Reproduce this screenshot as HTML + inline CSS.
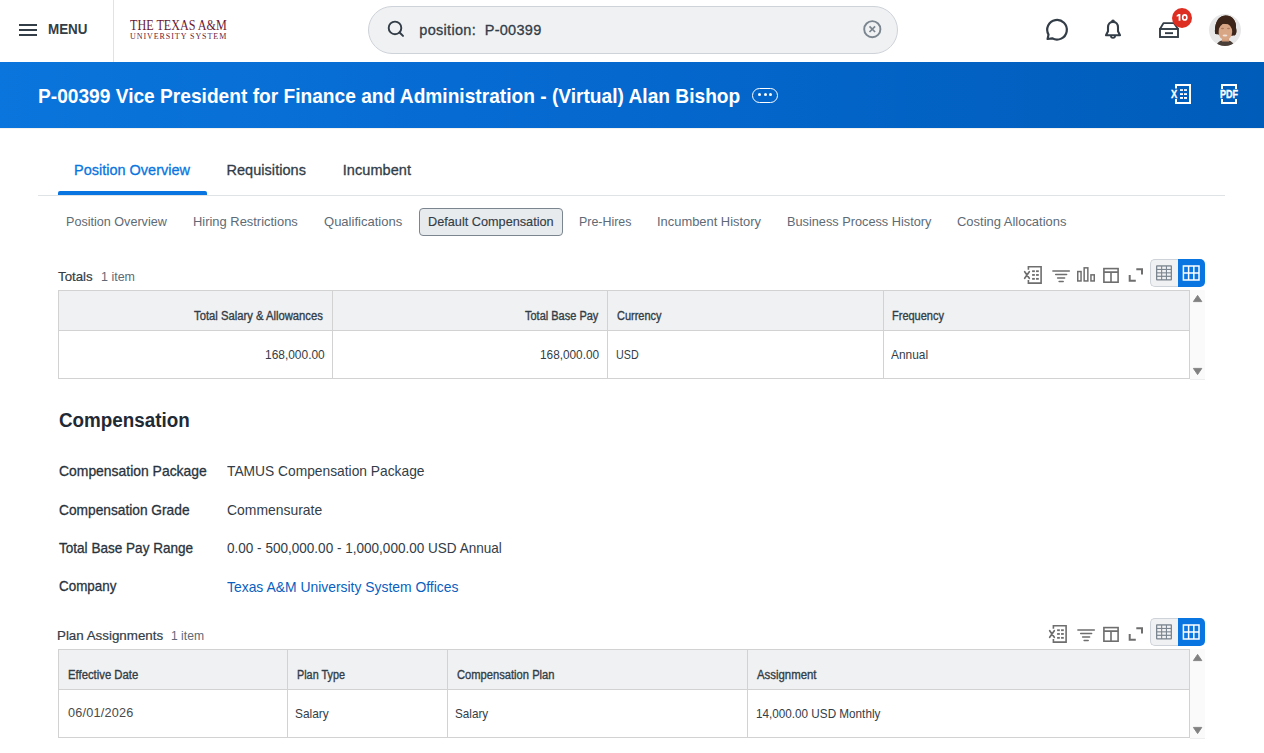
<!DOCTYPE html>
<html><head><meta charset="utf-8">
<style>
*{margin:0;padding:0;box-sizing:border-box}
html,body{width:1264px;height:753px;overflow:hidden;background:#fff;font-family:"Liberation Sans",sans-serif;color:#333d47}
.a{position:absolute;white-space:nowrap}
</style></head><body>
<div id="hdr" style="position:absolute;left:0;top:0;width:1264px;height:62px;background:#fff"></div>
<div class="a" style="left:19px;top:24px;width:18px;height:2px;background:#333d47"></div>
<div class="a" style="left:19px;top:29px;width:18px;height:2px;background:#333d47"></div>
<div class="a" style="left:19px;top:34px;width:18px;height:2px;background:#333d47"></div>
<div class="a" style="left:113px;top:0;width:1px;height:62px;background:#dfe2e6"></div>
<div class="a" style="left:368px;top:6px;width:530px;height:48px;border-radius:24px;background:#f0f1f2;border:1px solid #ced3d9"></div>
<svg class="a" style="left:384px;top:18px" width="24" height="24" viewBox="0 0 24 24"><circle cx="11" cy="9.9" r="6.3" fill="none" stroke="#333d47" stroke-width="1.9"/><path d="M15.6 14.5 L19 17.9" stroke="#333d47" stroke-width="2" stroke-linecap="round"/></svg>
<svg class="a" style="left:860px;top:17px" width="24" height="24" viewBox="0 0 24 24"><circle cx="12.3" cy="12.2" r="8.1" fill="none" stroke="#7b858f" stroke-width="1.9"/><path d="M9.5 9.4 L15.1 15 M15.1 9.4 L9.5 15" stroke="#7b858f" stroke-width="1.7"/></svg>
<svg class="a" style="left:1043px;top:16px" width="28" height="28" viewBox="0 0 28 28"><path d="M4.6 23 L5.5 18.6 A9.8 9.8 0 1 1 9.2 22.3 L4.6 23 Z" fill="none" stroke="#333d47" stroke-width="2.2" stroke-linejoin="round"/></svg>
<svg class="a" style="left:1101px;top:16px" width="24" height="26" viewBox="0 0 24 26"><path d="M12 5.9 C8.9 5.9 7 8.2 7 11.2 L7 15.3 L5 19.2 L19 19.2 L17 15.3 L17 11.2 C17 8.2 15.1 5.9 12 5.9 Z" fill="none" stroke="#333d47" stroke-width="2.1" stroke-linejoin="round"/><path d="M9.9 19.8 A2.1 2.1 0 0 0 14.1 19.8" fill="none" stroke="#333d47" stroke-width="1.8"/><path d="M10.1 5.5 A1.9 1.9 0 0 1 13.9 5.5 Z" fill="#333d47"/></svg>
<svg class="a" style="left:1157px;top:19px" width="24" height="22" viewBox="0 0 24 22"><path d="M3 10 L6.4 4.2 L17 4.2 L21 10" fill="none" stroke="#333d47" stroke-width="1.8" stroke-linejoin="round"/><rect x="3" y="10" width="18" height="8" fill="none" stroke="#333d47" stroke-width="1.9"/><rect x="8" y="13.2" width="8" height="1.9" fill="#333d47"/></svg>
<div class="a" style="left:1172px;top:8px;width:20px;height:20px;border-radius:50%;background:#de2e21"></div>
<svg class="a" style="left:1172px;top:8px" width="20" height="20" viewBox="0 0 20 20"><path d="M6.6 6 L8.4 6 L8.4 12.8 L6.6 12.8 L6.6 8 L4.7 8.7 L4.7 7.3 Z" fill="#fff"/><ellipse cx="12.75" cy="9.4" rx="2.1" ry="2.55" fill="none" stroke="#fff" stroke-width="1.6"/></svg>
<svg class="a" style="left:1209px;top:14px" width="32" height="32" viewBox="0 0 32 32">
  <defs><clipPath id="av"><circle cx="16" cy="16" r="16"/></clipPath></defs>
  <g clip-path="url(#av)">
    <rect width="32" height="32" fill="#e7e7e7"/>
    <path d="M7 32 C8 28.5 10.5 27 13 26.5 L19.5 26.5 C22 27 24.5 28.5 25.5 32 Z" fill="#4a3f38"/>
    <path d="M6 19.5 C5.5 11 8 2 16.5 1.6 C24 1.6 27.5 8 27 14 C27.8 17 27.5 20.5 25.5 21.5 C22 22 11 22 6 19.5 Z" fill="#3d2619"/>
    <rect x="13" y="22.5" width="7" height="5" fill="#cf9a7a"/>
    <ellipse cx="16.3" cy="17.8" rx="6.9" ry="8.3" fill="#d9a685"/>
    <ellipse cx="13.5" cy="14.5" rx="1.6" ry="0.7" fill="#b07a5e"/>
    <ellipse cx="19.5" cy="14.5" rx="1.6" ry="0.7" fill="#b07a5e"/>
    <path d="M6 19.5 C5.5 11 8 2 16.5 1.6 C24 1.6 27.5 8 27 14 C27.8 17 27.5 20.5 25.5 21.5 C24.5 17 23.5 13 22.5 10.5 C19 10.3 14 9.8 11 9 C10 11.5 9.5 15 9.3 19.5 C8 20.5 6.5 20.5 6 19.5 Z" fill="#3d2619"/>
    <ellipse cx="16" cy="21.6" rx="2.4" ry="1" fill="#efe2da"/>
  </g>
</svg>
<div id="banner" style="position:absolute;left:0;top:62px;width:1264px;height:66px;background:linear-gradient(90deg,#0a75dc 0%,#0569d0 45%,#005cb9 100%)"></div>
<div class="a" style="left:0;top:128px;width:1264px;height:1px;background:#f4f2f0"></div>
<div class="a" style="left:752px;top:88px;width:26px;height:15px;border:1.4px solid #fff;border-radius:8px"></div>
<div class="a" style="left:758.2px;top:93px;width:3px;height:3px;border-radius:50%;background:#fff"></div>
<div class="a" style="left:763.5px;top:93px;width:3px;height:3px;border-radius:50%;background:#fff"></div>
<div class="a" style="left:768.8px;top:93px;width:3px;height:3px;border-radius:50%;background:#fff"></div>
<svg class="a" style="left:1170px;top:80px" width="26" height="28" viewBox="0 0 26 28"><path d="M6 8.5 L6 5 L20 5 L20 23 L6 23 L6 19" fill="none" stroke="#fff" stroke-width="2"/><g fill="#fff"><rect x="10" y="9.2" width="3" height="1.7"/><rect x="14" y="9.2" width="3" height="1.7"/><rect x="10" y="13.2" width="3" height="1.8"/><rect x="14" y="13.2" width="3" height="1.8"/><rect x="10" y="17" width="3" height="1.9"/><rect x="14" y="17" width="3" height="1.9"/></g></svg>
<svg class="a" style="left:1216px;top:80px" width="26" height="28" viewBox="0 0 26 28"><path d="M6 9 L6 5 L20 5 L20 9 M6 19 L6 23 L20 23 L20 19" fill="none" stroke="#fff" stroke-width="2"/></svg>
<div class="a" style="left:58px;top:191px;width:149px;height:4px;background:#0875e1;border-radius:2px 2px 0 0"></div>
<div class="a" style="left:38px;top:195px;width:1187px;height:1px;background:#e0e3e6"></div>
<div class="a" style="left:419px;top:208px;width:144px;height:28px;border:1px solid #7b858f;border-radius:4px;background:#e8ebed"></div>

<!-- toolbar 1 -->
<svg class="a" style="left:1020px;top:262px" width="26" height="26" viewBox="0 0 26 26"><path d="M8.4 7.8 L8.4 4.8 L21.1 4.8 L21.1 21.1 L8.4 21.1 L8.4 18" fill="none" stroke="#6e6e6e" stroke-width="1.6"/><path d="M4.7 9.7 L9.3 16.3 M9.3 9.7 L4.7 16.3" stroke="#6e6e6e" stroke-width="1.7" stroke-linecap="round"/><g fill="#6e6e6e"><rect x="12.1" y="8.3" width="2.75" height="1.8"/><rect x="16.05" y="8.3" width="2.75" height="1.8"/><rect x="12.1" y="12.05" width="2.75" height="1.8"/><rect x="16.05" y="12.05" width="2.75" height="1.8"/><rect x="12.1" y="15.95" width="2.75" height="1.8"/><rect x="16.05" y="15.95" width="2.75" height="1.8"/></g></svg>
<svg class="a" style="left:1048px;top:262px" width="26" height="26" viewBox="0 0 26 26"><g stroke="#6e6e6e" stroke-width="1.5" stroke-linecap="round"><path d="M4.9 9 L21.3 9"/><path d="M7.7 12.4 L18.6 12.4"/><path d="M9.6 16.1 L16.6 16.1"/><path d="M11.1 19.5 L15.2 19.5"/></g></svg>
<svg class="a" style="left:1073px;top:262px" width="26" height="26" viewBox="0 0 26 26"><g fill="none" stroke="#6e6e6e" stroke-width="1.5"><rect x="4.75" y="9.55" width="3.3" height="9.4"/><rect x="11.15" y="5.85" width="3.7" height="13.1"/><rect x="17.95" y="12.85" width="3.3" height="6.1"/></g></svg>
<svg class="a" style="left:1098px;top:262px" width="26" height="26" viewBox="0 0 26 26"><g fill="none" stroke="#6e6e6e" stroke-width="1.6"><rect x="5.9" y="6.6" width="14.2" height="13.6"/><path d="M5.9 10.1 L20.1 10.1 M13 10.1 L13 20.2"/></g></svg>
<svg class="a" style="left:1123px;top:262px" width="26" height="26" viewBox="0 0 26 26"><g fill="none" stroke="#6e6e6e" stroke-width="2"><path d="M13.3 7.3 L19 7.3 L19 12.5"/><path d="M6.7 13 L6.7 18.8 L12.8 18.8"/></g></svg>
<div class="a" style="left:1178px;top:259px;width:27px;height:28px;border-radius:0 5px 5px 0;background:#0875e1"></div>
<div class="a" style="left:1150px;top:259px;width:28px;height:28px;border-radius:5px 0 0 5px;background:#f0f1f2;border:1px solid #ced3d9;border-right:none"></div>
<svg class="a" style="left:1150px;top:259px" width="55" height="28" viewBox="0 0 55 28"><rect x="6" y="6.3" width="16" height="15.3" fill="#7b858f" rx="1"/><g fill="#f0f1f2"><rect x="7.3" y="7.6" width="3.8" height="2.3"/><rect x="12.2" y="7.6" width="3.7" height="2.3"/><rect x="17" y="7.6" width="3.7" height="2.3"/><rect x="7.3" y="11" width="3.8" height="2.3"/><rect x="12.2" y="11" width="3.7" height="2.3"/><rect x="17" y="11" width="3.7" height="2.3"/><rect x="7.3" y="14.4" width="3.8" height="2.3"/><rect x="12.2" y="14.4" width="3.7" height="2.3"/><rect x="17" y="14.4" width="3.7" height="2.3"/><rect x="7.3" y="17.9" width="3.8" height="2.3"/><rect x="12.2" y="17.9" width="3.7" height="2.3"/><rect x="17" y="17.9" width="3.7" height="2.3"/></g>
<g fill="none" stroke="#fff" stroke-width="1.5"><rect x="33.4" y="7" width="15.6" height="14"/><path d="M33.4 14 L49 14 M38.6 7 L38.6 21 M43.8 7 L43.8 21"/></g></svg>
<!-- table 1 -->
<div class="a" style="left:58px;top:290px;width:1132px;height:89px;border:1px solid #d2d2d2;background:#fff"></div>
<div class="a" style="left:59px;top:291px;width:1130px;height:40px;background:#f0f1f2;border-bottom:1px solid #d2d2d2"></div>
<div class="a" style="left:332px;top:291px;width:1px;height:87px;background:#d2d2d2"></div>
<div class="a" style="left:607px;top:291px;width:1px;height:87px;background:#d2d2d2"></div>
<div class="a" style="left:883px;top:291px;width:1px;height:87px;background:#d2d2d2"></div>
<div class="a" style="left:1190px;top:290px;width:15px;height:90px;background:#fafafa;border-bottom:1px solid #eceeef"></div>
<svg class="a" style="left:1190px;top:290px" width="15" height="90" viewBox="0 0 15 90"><path d="M3.4 11.6 L11.8 11.6 L7.6 5.4 Z" fill="#808080" stroke="#808080" stroke-width="0.9" stroke-linejoin="round"/><path d="M3.4 78.4 L11.8 78.4 L7.6 84.6 Z" fill="#808080" stroke="#808080" stroke-width="0.9" stroke-linejoin="round"/></svg>
<!-- toolbar 2 -->
<svg class="a" style="left:1045px;top:621px" width="26" height="26" viewBox="0 0 26 26"><path d="M8.4 7.8 L8.4 4.8 L21.1 4.8 L21.1 21.1 L8.4 21.1 L8.4 18" fill="none" stroke="#6e6e6e" stroke-width="1.6"/><path d="M4.7 9.7 L9.3 16.3 M9.3 9.7 L4.7 16.3" stroke="#6e6e6e" stroke-width="1.7" stroke-linecap="round"/><g fill="#6e6e6e"><rect x="12.1" y="8.3" width="2.75" height="1.8"/><rect x="16.05" y="8.3" width="2.75" height="1.8"/><rect x="12.1" y="12.05" width="2.75" height="1.8"/><rect x="16.05" y="12.05" width="2.75" height="1.8"/><rect x="12.1" y="15.95" width="2.75" height="1.8"/><rect x="16.05" y="15.95" width="2.75" height="1.8"/></g></svg>
<svg class="a" style="left:1073px;top:621px" width="26" height="26" viewBox="0 0 26 26"><g stroke="#6e6e6e" stroke-width="1.5" stroke-linecap="round"><path d="M4.9 9 L21.3 9"/><path d="M7.7 12.4 L18.6 12.4"/><path d="M9.6 16.1 L16.6 16.1"/><path d="M11.1 19.5 L15.2 19.5"/></g></svg>
<svg class="a" style="left:1098px;top:621px" width="26" height="26" viewBox="0 0 26 26"><g fill="none" stroke="#6e6e6e" stroke-width="1.6"><rect x="5.9" y="6.6" width="14.2" height="13.6"/><path d="M5.9 10.1 L20.1 10.1 M13 10.1 L13 20.2"/></g></svg>
<svg class="a" style="left:1123px;top:621px" width="26" height="26" viewBox="0 0 26 26"><g fill="none" stroke="#6e6e6e" stroke-width="2"><path d="M13.3 7.3 L19 7.3 L19 12.5"/><path d="M6.7 13 L6.7 18.8 L12.8 18.8"/></g></svg>
<div class="a" style="left:1178px;top:618px;width:27px;height:28px;border-radius:0 5px 5px 0;background:#0875e1"></div>
<div class="a" style="left:1150px;top:618px;width:28px;height:28px;border-radius:5px 0 0 5px;background:#f0f1f2;border:1px solid #ced3d9;border-right:none"></div>
<svg class="a" style="left:1150px;top:618px" width="55" height="28" viewBox="0 0 55 28"><rect x="6" y="6.3" width="16" height="15.3" fill="#7b858f" rx="1"/><g fill="#f0f1f2"><rect x="7.3" y="7.6" width="3.8" height="2.3"/><rect x="12.2" y="7.6" width="3.7" height="2.3"/><rect x="17" y="7.6" width="3.7" height="2.3"/><rect x="7.3" y="11" width="3.8" height="2.3"/><rect x="12.2" y="11" width="3.7" height="2.3"/><rect x="17" y="11" width="3.7" height="2.3"/><rect x="7.3" y="14.4" width="3.8" height="2.3"/><rect x="12.2" y="14.4" width="3.7" height="2.3"/><rect x="17" y="14.4" width="3.7" height="2.3"/><rect x="7.3" y="17.9" width="3.8" height="2.3"/><rect x="12.2" y="17.9" width="3.7" height="2.3"/><rect x="17" y="17.9" width="3.7" height="2.3"/></g>
<g fill="none" stroke="#fff" stroke-width="1.5"><rect x="33.4" y="7" width="15.6" height="14"/><path d="M33.4 14 L49 14 M38.6 7 L38.6 21 M43.8 7 L43.8 21"/></g></svg>
<!-- table 2 -->
<div class="a" style="left:58px;top:649px;width:1132px;height:89px;border:1px solid #d2d2d2;background:#fff"></div>
<div class="a" style="left:59px;top:650px;width:1130px;height:40px;background:#f0f1f2;border-bottom:1px solid #d2d2d2"></div>
<div class="a" style="left:287px;top:650px;width:1px;height:87px;background:#d2d2d2"></div>
<div class="a" style="left:447px;top:650px;width:1px;height:87px;background:#d2d2d2"></div>
<div class="a" style="left:747px;top:650px;width:1px;height:87px;background:#d2d2d2"></div>
<div class="a" style="left:1190px;top:649px;width:15px;height:90px;background:#fafafa;border-bottom:1px solid #eceeef"></div>
<svg class="a" style="left:1190px;top:649px" width="15" height="90" viewBox="0 0 15 90"><path d="M3.4 11.6 L11.8 11.6 L7.6 5.4 Z" fill="#808080" stroke="#808080" stroke-width="0.9" stroke-linejoin="round"/><path d="M3.4 78.4 L11.8 78.4 L7.6 84.6 Z" fill="#808080" stroke="#808080" stroke-width="0.9" stroke-linejoin="round"/></svg>

<div class="a" style="left:130.0px;top:16.5px;font-family:'Liberation Serif',serif;font-size:14px;letter-spacing:0.0px;transform-origin:0 0;transform:scaleX(0.8667);line-height:18px;color:#6a1a35;">THE TEXAS A&amp;M</div>
<div class="a" style="left:130.0px;top:31.5px;font-family:'Liberation Serif',serif;font-size:8px;letter-spacing:0.938px;line-height:10px;color:#6a1a35;">UNIVERSITY SYSTEM</div>
<div class="a" style="left:1220.0px;top:88.8px;font-size:10px;font-weight:bold;letter-spacing:0.0px;transform-origin:0 0;transform:scaleX(0.9);line-height:12px;color:#fff;-webkit-text-stroke:0.3px #fff;">PDF</div>
<div class="a" style="left:1171.0px;top:89.0px;font-size:10px;font-weight:bold;letter-spacing:0.0px;transform-origin:0 0;transform:scaleX(0.9341);line-height:12px;color:#fff;-webkit-text-stroke:0.3px #fff;">X</div>
<div class="a" style="left:47.5px;top:20.2px;font-size:14.5px;font-weight:bold;letter-spacing:0.0px;transform-origin:0 0;transform:scaleX(0.9246);line-height:18px;color:#333d47;">MENU</div>
<div class="a" style="left:419.3px;top:20.8px;font-size:14.5px;letter-spacing:0.3px;line-height:18px;color:#333d47;-webkit-text-stroke:0.3px #333d47;">position:&nbsp; P-00399</div>
<div class="a" style="left:37.7px;top:83.0px;font-size:20.5px;font-weight:bold;letter-spacing:0.0px;transform-origin:0 0;transform:scaleX(0.934);line-height:26px;color:#fff;">P-00399 Vice President for Finance and Administration - (Virtual) Alan Bishop</div>
<div class="a" style="left:73.8px;top:161.1px;font-size:14.5px;letter-spacing:0.0px;transform-origin:0 0;transform:scaleX(0.9992);line-height:18px;color:#0875e1;-webkit-text-stroke:0.3px #0875e1;">Position Overview</div>
<div class="a" style="left:226.4px;top:161.2px;font-size:14.5px;letter-spacing:0.055px;line-height:18px;color:#333d47;-webkit-text-stroke:0.3px #333d47;">Requisitions</div>
<div class="a" style="left:342.7px;top:161.2px;font-size:14.5px;letter-spacing:0.075px;line-height:18px;color:#333d47;-webkit-text-stroke:0.3px #333d47;">Incumbent</div>
<div class="a" style="left:66.2px;top:214.1px;font-size:13.2px;letter-spacing:0.0px;transform-origin:0 0;transform:scaleX(0.9552);line-height:16px;color:#5e6a75;">Position Overview</div>
<div class="a" style="left:193.0px;top:214.1px;font-size:13.2px;letter-spacing:0.0px;transform-origin:0 0;transform:scaleX(0.9793);line-height:16px;color:#5e6a75;">Hiring Restrictions</div>
<div class="a" style="left:324.0px;top:214.1px;font-size:13.2px;letter-spacing:0.0px;transform-origin:0 0;transform:scaleX(0.9873);line-height:16px;color:#5e6a75;">Qualifications</div>
<div class="a" style="left:427.8px;top:213.9px;font-size:13.2px;letter-spacing:0.0px;transform-origin:0 0;transform:scaleX(0.9628);line-height:16px;color:#333d47;-webkit-text-stroke:0.15px #333d47;">Default Compensation</div>
<div class="a" style="left:579.0px;top:214.1px;font-size:13.2px;letter-spacing:0.0px;transform-origin:0 0;transform:scaleX(0.9427);line-height:16px;color:#5e6a75;">Pre-Hires</div>
<div class="a" style="left:657.0px;top:214.1px;font-size:13.2px;letter-spacing:0.0px;transform-origin:0 0;transform:scaleX(0.9784);line-height:16px;color:#5e6a75;">Incumbent History</div>
<div class="a" style="left:786.9px;top:214.1px;font-size:13.2px;letter-spacing:0.0px;transform-origin:0 0;transform:scaleX(0.9658);line-height:16px;color:#5e6a75;">Business Process History</div>
<div class="a" style="left:957.4px;top:214.1px;font-size:13.2px;letter-spacing:0.0px;transform-origin:0 0;transform:scaleX(0.982);line-height:16px;color:#5e6a75;">Costing Allocations</div>
<div class="a" style="left:58.2px;top:267.9px;font-size:13.4px;letter-spacing:0.0px;transform-origin:0 0;transform:scaleX(0.9915);line-height:17px;color:#333d47;-webkit-text-stroke:0.2px #333d47;">Totals</div>
<div class="a" style="left:101.0px;top:268.0px;font-size:13.4px;letter-spacing:0.0px;transform-origin:0 0;transform:scaleX(0.9315);line-height:17px;color:#5e6a75;">1 item</div>
<div class="a" style="left:194.3px;top:308.0px;font-size:12.5px;letter-spacing:0.0px;transform-origin:0 0;transform:scaleX(0.9);line-height:16px;color:#333d47;-webkit-text-stroke:0.35px #333d47;">Total Salary &amp; Allowances</div>
<div class="a" style="left:525.4px;top:308.0px;font-size:12.5px;letter-spacing:0.0px;transform-origin:0 0;transform:scaleX(0.8798);line-height:16px;color:#333d47;-webkit-text-stroke:0.35px #333d47;">Total Base Pay</div>
<div class="a" style="left:616.9px;top:308.0px;font-size:12.5px;letter-spacing:0.0px;transform-origin:0 0;transform:scaleX(0.8765);line-height:16px;color:#333d47;-webkit-text-stroke:0.35px #333d47;">Currency</div>
<div class="a" style="left:892.0px;top:308.0px;font-size:12.5px;letter-spacing:0.0px;transform-origin:0 0;transform:scaleX(0.8796);line-height:16px;color:#333d47;-webkit-text-stroke:0.35px #333d47;">Frequency</div>
<div class="a" style="left:265.0px;top:346.8px;font-size:12.7px;letter-spacing:0.0px;transform-origin:0 0;transform:scaleX(0.9406);line-height:16px;color:#333d47;">168,000.00</div>
<div class="a" style="left:540.1px;top:346.8px;font-size:12.7px;letter-spacing:0.0px;transform-origin:0 0;transform:scaleX(0.9307);line-height:16px;color:#333d47;">168,000.00</div>
<div class="a" style="left:615.5px;top:346.8px;font-size:12.7px;letter-spacing:0.0px;transform-origin:0 0;transform:scaleX(0.8445);line-height:16px;color:#333d47;">USD</div>
<div class="a" style="left:891.0px;top:346.8px;font-size:12.7px;letter-spacing:0.0px;transform-origin:0 0;transform:scaleX(0.9388);line-height:16px;color:#333d47;">Annual</div>
<div class="a" style="left:58.6px;top:407.8px;font-size:19.6px;font-weight:bold;letter-spacing:0.0px;transform-origin:0 0;transform:scaleX(0.9613);line-height:24px;color:#1f2a35;">Compensation</div>
<div class="a" style="left:58.7px;top:461.8px;font-size:14.5px;letter-spacing:0.0px;transform-origin:0 0;transform:scaleX(0.9598);line-height:18px;color:#29333d;-webkit-text-stroke:0.3px #29333d;">Compensation Package</div>
<div class="a" style="left:58.7px;top:500.8px;font-size:14.5px;letter-spacing:0.0px;transform-origin:0 0;transform:scaleX(0.9471);line-height:18px;color:#29333d;-webkit-text-stroke:0.3px #29333d;">Compensation Grade</div>
<div class="a" style="left:58.7px;top:538.9px;font-size:14.5px;letter-spacing:0.0px;transform-origin:0 0;transform:scaleX(0.9347);line-height:18px;color:#29333d;-webkit-text-stroke:0.3px #29333d;">Total Base Pay Range</div>
<div class="a" style="left:58.7px;top:577.4px;font-size:14.5px;letter-spacing:0.0px;transform-origin:0 0;transform:scaleX(0.9244);line-height:18px;color:#29333d;-webkit-text-stroke:0.3px #29333d;">Company</div>
<div class="a" style="left:227.3px;top:461.9px;font-size:14.5px;letter-spacing:0.0px;transform-origin:0 0;transform:scaleX(0.9512);line-height:18px;color:#333d47;">TAMUS Compensation Package</div>
<div class="a" style="left:227.3px;top:501.0px;font-size:14.5px;letter-spacing:0.0px;transform-origin:0 0;transform:scaleX(0.9596);line-height:18px;color:#333d47;">Commensurate</div>
<div class="a" style="left:227.3px;top:539.0px;font-size:14.5px;letter-spacing:0.0px;transform-origin:0 0;transform:scaleX(0.934);line-height:18px;color:#333d47;">0.00 - 500,000.00 - 1,000,000.00 USD Annual</div>
<div class="a" style="left:227.3px;top:578.2px;font-size:14.5px;letter-spacing:0.0px;transform-origin:0 0;transform:scaleX(0.9585);line-height:18px;color:#0a5fc0;">Texas A&amp;M University System Offices</div>
<div class="a" style="left:57.2px;top:627.0px;font-size:13.4px;letter-spacing:0.0px;transform-origin:0 0;transform:scaleX(0.9971);line-height:17px;color:#333d47;-webkit-text-stroke:0.2px #333d47;">Plan Assignments</div>
<div class="a" style="left:171.4px;top:627.0px;font-size:13.4px;letter-spacing:0.0px;transform-origin:0 0;transform:scaleX(0.9057);line-height:17px;color:#5e6a75;">1 item</div>
<div class="a" style="left:67.5px;top:667.0px;font-size:12.5px;letter-spacing:0.0px;transform-origin:0 0;transform:scaleX(0.9052);line-height:16px;color:#333d47;-webkit-text-stroke:0.35px #333d47;">Effective Date</div>
<div class="a" style="left:297.1px;top:666.8px;font-size:12.5px;letter-spacing:0.0px;transform-origin:0 0;transform:scaleX(0.8656);line-height:16px;color:#333d47;-webkit-text-stroke:0.35px #333d47;">Plan Type</div>
<div class="a" style="left:456.8px;top:666.8px;font-size:12.5px;letter-spacing:0.0px;transform-origin:0 0;transform:scaleX(0.8936);line-height:16px;color:#333d47;-webkit-text-stroke:0.35px #333d47;">Compensation Plan</div>
<div class="a" style="left:757.0px;top:666.8px;font-size:12.5px;letter-spacing:0.0px;transform-origin:0 0;transform:scaleX(0.9107);line-height:16px;color:#333d47;-webkit-text-stroke:0.35px #333d47;">Assignment</div>
<div class="a" style="left:68.1px;top:704.8px;font-size:12.7px;letter-spacing:0.178px;line-height:16px;color:#4a4a4a;">06/01/2026</div>
<div class="a" style="left:295.1px;top:706.0px;font-size:12.7px;letter-spacing:0.0px;transform-origin:0 0;transform:scaleX(0.9374);line-height:16px;color:#333d47;">Salary</div>
<div class="a" style="left:454.6px;top:706.0px;font-size:12.7px;letter-spacing:0.0px;transform-origin:0 0;transform:scaleX(0.9229);line-height:16px;color:#333d47;">Salary</div>
<div class="a" style="left:755.5px;top:706.0px;font-size:12.7px;letter-spacing:0.0px;transform-origin:0 0;transform:scaleX(0.9231);line-height:16px;color:#333d47;">14,000.00 USD Monthly</div>
</body></html>
